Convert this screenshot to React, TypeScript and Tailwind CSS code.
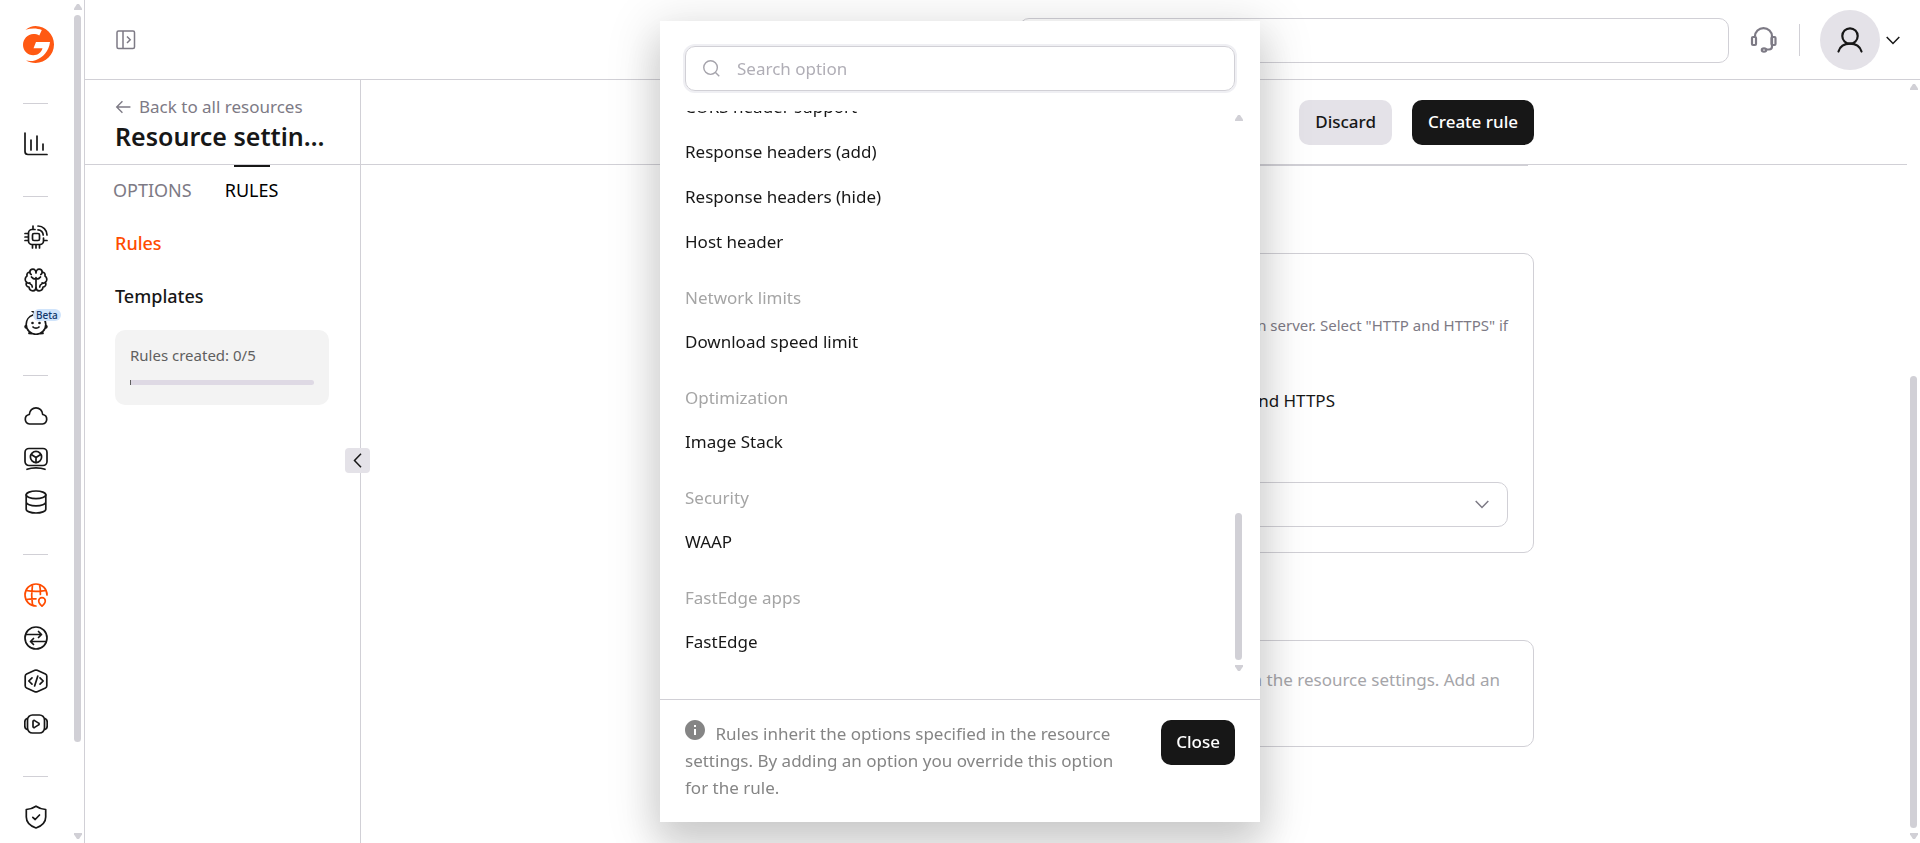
import React from "react";

type IconProps = { children: React.ReactNode; className?: string };

function Icon({ children, className = "size-6" }: IconProps) {
  return (
    <svg
      viewBox="0 0 24 24"
      fill="none"
      stroke="currentColor"
      strokeWidth="1.700"
      strokeLinecap="round"
      strokeLinejoin="round"
      className={className}
      aria-hidden="true"
    >
      {children}
    </svg>
  );
}

function Logo() {
  return (
    <svg viewBox="0 0 31 37" className="h-[37px] w-[31px]" aria-hidden="true">
      <path
        fill="#ff5913"
        d="M2.5 3.8C5.5 1.3 9 0 12.5 0 22.7 0 31 8.3 31 18.5S22.7 37 12.5 37C9 37 5.5 36 3 34.6 6 35.3 9.5 35.2 12.5 34.2 20 31.8 26 25 27 16H13L10.5 22.3H19.5C18.5 26.5 14.8 29.3 10.3 29.3 4.6 29.3 0 24.8 0 19S4.6 8 10.3 8C12.5 8 14.700 8.300 16.300 9.400L18.800 4C14 1.900 8 2 2.500 3.800Z"
      />
    </svg>
  );
}

const icons = {
  chart: (
    <Icon>
      <path d="M1 1v18.500a3 3 0 0 0 3 3h19M7 8v10M13 4v14M19 12v6" />
    </Icon>
  ),
  chip: (
    <Icon>
      <path d="M11 4.500H8A3.500 3.500 0 0 0 4.500 8v8A3.500 3.500 0 0 0 8 19.500h8a3.500 3.500 0 0 0 3.500-3.500v-3" />
      <rect x="8.500" y="8.500" width="7" height="7" rx="1.500" />
      <path d="M9 4V1M4 8.500H1M4 12H1M4 15.500H1M8.500 20v3M12 20v3M15.500 20v3M20 15.500h3M14 1a9 9 0 0 1 9 9M14 4.800a5.200 5.200 0 0 1 5.200 5.200" />
    </Icon>
  ),
  brain: (
    <Icon>
      <path d="M12 5C12 2.600 10.600 1.200 8.900 1.200 7.200 1.200 5.900 2.400 5.800 4 3.800 4.200 2.500 5.900 3 8 .7 9.500.6 12.800 2.600 14.300 1.400 16.500 2.600 19 5 19.200 5.300 21.400 7 22.800 8.900 22.800 10.700 22.800 12 21.400 12 19.500M12 5C12 2.600 13.400 1.200 15.100 1.200c1.700 0 3 1.200 3.100 2.800 2 .2 3.300 1.900 2.800 4 2.300 1.500 2.400 4.800.4 6.300 1.200 2.200 0 4.700-2.400 4.900-.3 2.200-2 3.600-3.900 3.600-1.800 0-3.100-1.400-3.100-3.300" />
      <path d="M12 9.500v10M7.500 9c1.200 1.800 2.800 2.200 4.500 2.200S15.300 10.800 16.500 9M5.800 4c0 1.200.5 2 1.400 2.500M18.200 4c0 1.200-.5 2-1.400 2.500M2.600 14.300c1 .9 2.200 1 3.300.6M21.400 14.300c-1 .9-2.200 1-3.300.6M8.300 19c0-1.500-.8-2.600-2-3M15.700 19c0-1.500.8-2.600 2-3" />
    </Icon>
  ),
  baby: (
    <Icon>
      <path d="M9 4C10.500 3 10.500 1.500 8 0M9 4A9.800 9.800 0 0 0 2.200 13.500 9.800 9.800 0 0 0 21.800 13.500C21.800 11 21 9 19.500 7M2 14.500c-1.300.6-1.300 2.200.6 2.700M22 14.500c1.300.6 1.300 2.200-.6 2.700M5.500 20.500 5 22.500l3 .2M18.500 20.500l.5 2-3 .2M9 16c1.500 1.600 4.500 1.600 6 0" />
      <circle cx="8.500" cy="12" r="1.300" fill="currentColor" stroke="none" />
      <circle cx="15.500" cy="12" r="1.300" fill="currentColor" stroke="none" />
    </Icon>
  ),
  cloud: (
    <Icon>
      <path d="M5.500 20A4.800 4.800 0 0 1 5.300 10.500C5.500 6.500 8.500 3.800 12 3.800s6.500 2.700 6.700 6.700A4.800 4.800 0 0 1 18.500 20Z" />
    </Icon>
  ),
  machine: (
    <Icon>
      <rect x="1" y="1.500" width="22" height="17" rx="4" />
      <circle cx="12" cy="10" r="5.600" />
      <path d="M12 15.500V10.500L7.300 7.500M12 10.500l4.700-3M3 22.300c5-2 13-2 18 0" />
    </Icon>
  ),
  database: (
    <Icon>
      <ellipse cx="12" cy="4.800" rx="9.800" ry="3.800" />
      <path d="M2.200 4.800v14.400c0 2.100 4.400 3.800 9.800 3.800s9.800-1.700 9.800-3.800V4.800M2.200 12c0 2.100 4.400 3.800 9.800 3.800s9.800-1.700 9.800-3.800" />
    </Icon>
  ),
  globe: (
    <Icon>
      <path d="M12 23A11 11 0 1 1 23 12M2 7.500c6 1 14 1 20 0M2 16.500c3-.5 7-.8 10-.6M8.500 1.500c-1 6.500-1 14.500 0 21M15.500 1.500c.8 3.200 1 7 .9 10" />
      <path d="M18 23.200c-2-2-3.300-3.700-3.300-5.300a3.300 3.300 0 0 1 6.600 0c0 1.600-1.300 3.300-3.300 5.300Z" />
    </Icon>
  ),
  swap: (
    <Icon>
      <circle cx="12" cy="12" r="11" />
      <path d="M2.500 8.500h15M14.500 5.500l3 3-3 3M21.500 15.500h-15M9.500 12.500l-3 3 3 3" />
    </Icon>
  ),
  code: (
    <Icon>
      <path d="M10.800 1.300 2.600 5A2.500 2.500 0 0 0 1.200 7.300v9.400A2.500 2.500 0 0 0 2.600 19l8.200 3.700a3 3 0 0 0 2.400 0l8.200-3.700a2.500 2.500 0 0 0 1.400-2.300V7.300A2.500 2.500 0 0 0 21.400 5l-8.200-3.700a3 3 0 0 0-2.400 0Z" />
      <path d="m8 8.800-3.200 3.200L8 15.200M16 8.800l3.200 3.200-3.200 3.200M13.800 7l-3.200 10" />
    </Icon>
  ),
  video: (
    <Icon>
      <rect x="3.500" y="3" width="17" height="18" rx="5" />
      <path d="M3 6.500C1.200 7 .8 8.500.8 10v4c0 1.500.4 3 2.200 3.500M21 6.500c1.800.5 2.200 2 2.200 3.500v4c0 1.500-.4 3-2.200 3.500" />
      <path d="M9 9.500v5c0 .9.900 1.300 1.600.9l4-2.500c.7-.4.7-1.400 0-1.800l-4-2.500c-.7-.4-1.600 0-1.600.9Z" />
    </Icon>
  ),
  shield: (
    <Icon>
      <path d="M12 1.200c2.500 1.800 5.500 2.800 9.700 3.300V12c0 5-4 9-9.700 11-5.700-2-9.700-6-9.700-11V4.500C6.500 4 9.500 3 12 1.200Z" />
      <path d="m8.800 12.300 2.400 2.200 4.300-4.500" />
    </Icon>
  ),
};

type NavItem = { name: string; icon: React.ReactNode; active?: boolean; beta?: boolean };

const navGroups: NavItem[][] = [
  [{ name: "Reports", icon: icons.chart }],
  [
    { name: "Edge devices", icon: icons.chip },
    { name: "AI", icon: icons.brain },
    { name: "Assistant", icon: icons.baby, beta: true },
  ],
  [
    { name: "Cloud", icon: icons.cloud },
    { name: "Hosting", icon: icons.machine },
    { name: "Storage", icon: icons.database },
  ],
  [
    { name: "CDN", icon: icons.globe, active: true },
    { name: "DNS", icon: icons.swap },
    { name: "FastEdge", icon: icons.code },
    { name: "Streaming", icon: icons.video },
  ],
  [{ name: "Security", icon: icons.shield }],
];

function Arrow({ down = false }: { down?: boolean }) {
  return (
    <svg viewBox="0 0 8 6" className="h-1.5 w-2 shrink-0" aria-hidden="true">
      <path fill="#d1d0d6" d={down ? "M0 0h8v1.500L5 6H3L0 1.500Z" : "M0 6h8V4.500L5 0H3L0 4.500Z"} />
    </svg>
  );
}

function Scrollbar({ thumb }: { thumb: string }) {
  return (
    <div className="flex w-[13px] shrink-0 flex-col items-center gap-[5px] py-1">
      <Arrow />
      <div className="flex w-full flex-1 flex-col items-center">
        <div className={thumb} />
      </div>
      <Arrow down />
    </div>
  );
}

function Sidebar() {
  return (
    <aside className="flex w-[85px] shrink-0 border-r border-[#d1d0d6]">
      <nav className="flex min-h-0 flex-1 flex-col items-start overflow-hidden pl-[23px] pt-[26px]">
        <a href="#home" aria-label="Home" className="mb-10">
          <Logo />
        </a>
        {navGroups.map((group, i) => (
          <div key={i} className="flex flex-col pb-[31px]">
            <hr className="mb-[18px] w-[25px] border-[#d1d0d6]" />
            {group.map((item) => (
              <a
                key={item.name}
                href="#nav"
                aria-label={item.name}
                className={
                  item.active
                    ? "relative flex h-[43px] items-center justify-center text-[#ff4c00]"
                    : "relative flex h-[43px] items-center justify-center text-[#171717]"
                }
              >
                {item.icon}
                {item.beta && (
                  <span className="absolute left-[10px] top-2 rounded-full bg-[#d0e4fb] px-[3px] text-[10px] font-medium leading-3 text-[#12386b]">
                    Beta
                  </span>
                )}
              </a>
            ))}
          </div>
        ))}
      </nav>
      <Scrollbar thumb="h-17/19 w-[7px] rounded-full bg-[#d1d0d6]" />
    </aside>
  );
}

function Header() {
  return (
    <header className="flex h-20 shrink-0 items-center border-b border-[#d1d0d6] pl-[31px] pr-5 pt-px">
      <button aria-label="Expand menu" className="text-[#7d7a85]">
        <svg viewBox="0 0 20 20" fill="none" stroke="currentColor" strokeWidth="1.500" className="size-5" aria-hidden="true">
          <rect x="1" y="1" width="17.500" height="17.500" rx="1.500" />
          <path d="M7 1v17.500M11 6.500l3.200 3.300L11 13" />
        </svg>
      </button>
      <input
        aria-label="Search"
        className="ml-auto h-[45px] w-[710px] rounded-[10px] border border-[#d1d0d6] px-4 outline-none"
      />
      <button aria-label="Support" className="ml-5 text-[#7d7a85]">
        <svg viewBox="0 0 30 26" fill="none" stroke="currentColor" strokeWidth="2.200" className="h-[26px] w-[30px]" aria-hidden="true">
          <path d="M6 9.500V9.300a8.500 8.200 0 0 1 17 0v10.200a3 3 0 0 1-3 3H17" />
          <rect x="3" y="10" width="4" height="8" rx="1" />
          <rect x="22.500" y="10" width="4" height="8" rx="1" />
          <ellipse cx="15" cy="23" rx="2.200" ry="1.700" />
        </svg>
      </button>
      <div className="ml-5 h-8 w-px bg-[#d1d0d6]" />
      <button aria-label="Account" className="ml-5 flex items-center gap-1.5 text-[#171717]">
        <span className="flex size-[60px] items-center justify-center rounded-full bg-[#e4e2e8]">
          <svg viewBox="0 0 26 26" fill="none" stroke="currentColor" strokeWidth="2.200" strokeLinecap="round" className="size-[26px]" aria-hidden="true">
            <circle cx="13" cy="9" r="7.700" />
            <path d="M1.500 24.500C3 19.500 7.500 16.700 13 16.700s10 2.800 11.500 7.800" />
          </svg>
        </span>
        <svg viewBox="0 0 14 9" fill="none" stroke="currentColor" strokeWidth="1.500" className="h-[9px] w-[14px]" aria-hidden="true">
          <path d="m.7 1 6.300 6.500L13.300 1" />
        </svg>
      </button>
    </header>
  );
}

function ResourcePanel() {
  return (
    <section className="relative w-[276px] shrink-0 border-r border-[#d1d0d6]">
      <div className="flex h-[85px] flex-col border-b border-[#d1d0d6] pl-[30px] pr-[35px] pt-[15px]">
        <a href="#resources" className="flex items-center gap-2 text-[17px] leading-6 text-[#7d7a85]">
          <svg viewBox="0 0 14 12" fill="none" stroke="currentColor" strokeWidth="1.200" className="h-3.5 w-4" aria-hidden="true">
            <path d="M13.500 6H1.500M6.500 1l-5 5 5 5" />
          </svg>
          Back to all resources
        </a>
        <h1 className="truncate text-[25px] font-semibold leading-[34px] text-[#171717]">Resource settings</h1>
      </div>
      <div className="flex gap-[33px] pl-7 text-lg leading-6" role="tablist">
        <button role="tab" aria-selected="false" className="pb-[9px] pt-[13px] text-[#7d7a85]">
          OPTIONS
        </button>
        <button role="tab" aria-selected="true" className="flex flex-col items-center text-black">
          <span className="h-0.5 w-9 bg-[#171717]" />
          <span className="pb-[9px] pt-[11px]">RULES</span>
        </button>
      </div>
      <div className="flex flex-col pl-[30px] pr-[31px] pt-5 text-lg font-medium leading-6 text-[#171717]">
        <a href="#rules" className="text-[#ff4c00]">
          Rules
        </a>
        <a href="#templates" className="mt-[29px]">
          Templates
        </a>
        <div className="mt-[22px] rounded-[10px] bg-[#f3f3f3] px-[15px] pb-5 pt-[15px]">
          <p className="text-[15px] font-normal leading-5 text-[#5f5f5f]">Rules created: 0/5</p>
          <div className="mt-[15px] h-[5px] rounded-r-full bg-[#ded9e4]">
            <div className="h-full w-px bg-[#5f5f5f]" />
          </div>
        </div>
      </div>
      <button
        aria-label="Collapse panel"
        className="absolute -right-[10px] top-[368px] flex size-[25px] items-center justify-center rounded bg-[#e4e2e8] text-[#171717]"
      >
        <svg viewBox="0 0 9 15" fill="none" stroke="currentColor" strokeWidth="1.500" className="h-[15px] w-[9px]" aria-hidden="true">
          <path d="M8 .7 1.500 7.500 8 14.300" />
        </svg>
      </button>
    </section>
  );
}

function RuleEditor() {
  return (
    <main className="flex min-w-0 flex-1">
      <div className="flex min-w-0 flex-1 flex-col">
        <div className="flex h-[85px] shrink-0 justify-center border-b border-[#d1d0d6] pt-5">
          <div className="flex w-[800px] justify-end gap-5 text-[17px] font-medium leading-6">
            <button className="h-[45px] rounded-[10px] bg-[#e4e2e8] px-4 pb-0.5 text-[#171717]">Discard</button>
            <button className="h-[45px] rounded-[10px] bg-[#171717] px-4 pb-0.5 text-white">Create rule</button>
          </div>
        </div>
        <div className="flex min-h-0 flex-1 justify-center overflow-hidden">
          <div className="w-[800px] text-[17px] leading-6 text-[#171717]">
            <div className="mx-1.5 mb-[87px] h-px bg-[#d1d0d6]" />
            <div className="mb-[87px] rounded-[10px] border border-[#d1d0d6] px-[25px] pb-[25px] pt-[59px]">
              <p className="text-right text-[15px] leading-6 text-[#7d7a85]">
                origin server. Select "HTTP and HTTPS" if
              </p>
              <div className="mt-[52px] flex w-[575px] justify-end gap-2">
                <input type="radio" name="protocol" id="both" defaultChecked />
                <label htmlFor="both">HTTP and HTTPS</label>
              </div>
              <button
                aria-label="Protocol"
                className="mt-[69px] flex h-[45px] w-full items-center justify-end rounded-[10px] border border-[#d1d0d6] pr-[18px] text-[#7d7a85]"
              >
                <svg viewBox="0 0 14 9" fill="none" stroke="currentColor" strokeWidth="1.500" className="h-[9px] w-[14px]" aria-hidden="true">
                  <path d="m.7 1 6.300 6.500L13.300 1" />
                </svg>
              </button>
            </div>
            <div className="h-[107px] rounded-[10px] border border-[#d1d0d6] px-[33px] pt-[25px] text-[#a5a5a9]">
              <p className="text-right leading-7">from the resource settings. Add an</p>
            </div>
          </div>
        </div>
      </div>
      <Scrollbar thumb="mt-auto h-37/60 w-[7px] rounded-full bg-[#d1d0d6]" />
    </main>
  );
}

const optionGroups: { title: string; items: string[] }[] = [
  { title: "", items: ["CORS header support", "Response headers (add)", "Response headers (hide)", "Host header"] },
  { title: "Network limits", items: ["Download speed limit"] },
  { title: "Optimization", items: ["Image Stack"] },
  { title: "Security", items: ["WAAP"] },
  { title: "FastEdge apps", items: ["FastEdge"] },
];

function OptionDialog() {
  return (
    <div className="fixed inset-0 flex items-center justify-center">
      <div
        role="dialog"
        aria-label="Add option"
        className="flex w-[600px] flex-col bg-white pt-[25px] text-[17px] leading-6 text-[#171717] shadow-[0_24px_38px_3px_rgba(0,0,0,0.12),0_9px_46px_8px_rgba(0,0,0,0.12)]"
      >
        <label className="mx-[25px] flex h-[45px] items-center gap-[17px] rounded-[10px] border border-[#d1d0d6] px-[17px] text-[#a5a3ab] ring-2 ring-[#efeff3]">
          <svg viewBox="0 0 18 18" fill="none" stroke="currentColor" strokeWidth="1.500" className="size-[17px]" aria-hidden="true">
            <circle cx="8" cy="8" r="7.200" />
            <path d="m13.200 13.200 4 4" />
          </svg>
          <input
            aria-label="Search option"
            placeholder="Search option"
            className="min-w-0 flex-1 outline-none placeholder:text-[#b0aeb6]"
          />
        </label>
        <div className="mt-5 flex h-[564px] pr-[15px]">
          <div className="flex flex-1 flex-col justify-end overflow-hidden pb-[11px] pl-[25px]">
            {optionGroups.map((group) => (
              <div key={group.title} className="flex shrink-0 flex-col">
                {group.title && <h4 className="pb-[9px] pt-[22px] text-[#a5a5a5]">{group.title}</h4>}
                {group.items.map((item) => (
                  <button key={item} className="h-[45px] text-left">
                    {item}
                  </button>
                ))}
              </div>
            ))}
          </div>
          <Scrollbar thumb="mt-auto h-11/40 w-[7px] rounded-full bg-[#d1d0d6]" />
        </div>
        <footer className="mt-6 flex items-start justify-between gap-[34px] border-t border-[#d1d0d6] px-[25px] pb-[21px] pt-5">
          <p className="leading-[27px] text-[#858585]">
            <svg viewBox="2 2 20 20" className="mr-1.5 inline size-5 align-baseline" aria-hidden="true">
              <path
                fill="currentColor"
                d="M12 2C6.480 2 2 6.480 2 12s4.480 10 10 10 10-4.480 10-10S17.520 2 12 2zm1 15h-2v-6h2v6zm0-8h-2V7h2v2z"
              />
            </svg>{" "}
            Rules inherit the options specified in the resource settings. By adding an option you override this option
            for the rule.
          </p>
          <button className="h-[45px] shrink-0 rounded-[10px] bg-[#171717] px-[15px] pb-0.5 font-medium text-white">
            Close
          </button>
        </footer>
      </div>
    </div>
  );
}

export default function App() {
  return (
    <div className="flex h-screen overflow-hidden bg-white font-['Noto_Sans',sans-serif]">
      <Sidebar />
      <div className="flex min-w-0 flex-1 flex-col">
        <Header />
        <div className="flex min-h-0 flex-1">
          <ResourcePanel />
          <RuleEditor />
        </div>
      </div>
      <OptionDialog />
    </div>
  );
}
